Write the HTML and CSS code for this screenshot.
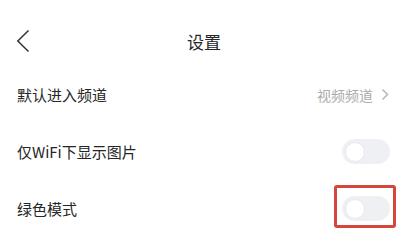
FILE: index.html
```html
<!DOCTYPE html>
<html lang="zh">
<head>
<meta charset="utf-8">
<link rel="stylesheet" href="styles.css">
</head>
<body>
<div class="page">
  <header class="header">
    <svg class="back" width="14" height="24" viewBox="0 0 14 24"><polyline points="12.5,1.5 1.8,12 12.5,22.5" fill="none" stroke="#333" stroke-width="1.5" stroke-linejoin="miter"/></svg>
    <div class="title">设置</div>
  </header>
  <div class="row">
    <span class="label">默认进入频道</span>
    <span class="value">视频频道<svg class="arrow" width="8" height="13" viewBox="0 0 8 13"><polyline points="1.5,1.5 6.5,6.5 1.5,11.5" fill="none" stroke="#b8b8b8" stroke-width="1.6"/></svg></span>
  </div>
  <div class="row">
    <span class="label">仅WiFi下显示图片</span>
    <span class="switch"><span class="knob"></span></span>
  </div>
  <div class="row">
    <span class="label">绿色模式</span>
    <span class="switch marked"><span class="knob"></span><span class="highlight"></span></span>
  </div>
</div>
</body>
</html>
```
FILE: styles.css
```css
* { box-sizing: border-box; }
html, body { margin: 0; padding: 0; background: #fff; }
body {
  font-family: "Noto Sans CJK SC", "Noto Sans", sans-serif;
  color: #222;
  width: 408px;
  height: 236px;
  overflow: hidden;
}
.page { display: flex; flex-direction: column; }
.header {
  height: 66px;
  padding-top: 20px;
  position: relative;
  display: flex;
  align-items: flex-start;
  justify-content: center;
}
.back {
  position: absolute;
  left: 16px;
  top: 29px;
}
.title {
  font-size: 17px;
  line-height: 44px;
  color: #262626;
}
.row {
  height: 57px;
  padding: 0 18px 0 17px;
  display: flex;
  align-items: center;
  justify-content: space-between;
}
.label { font-size: 15px; color: #262626; }
.value {
  font-size: 14px;
  color: #ababab;
  display: flex;
  align-items: center;
  gap: 8px;
}
.arrow { margin-right: 1px; }
.switch {
  position: relative;
  width: 48px;
  height: 25px;
  border-radius: 13px;
  background: #eef0f4;
  display: flex;
  align-items: center;
  padding-left: 3px;
}
.knob {
  width: 20px;
  height: 20px;
  border-radius: 50%;
  background: #fff;
  border: 1px solid #e6e8ed;
}
.highlight {
  position: absolute;
  left: -8px;
  right: -6px;
  top: -11px;
  bottom: -7px;
  border: 3px solid #d6463d;
  border-radius: 3px;
}
```
